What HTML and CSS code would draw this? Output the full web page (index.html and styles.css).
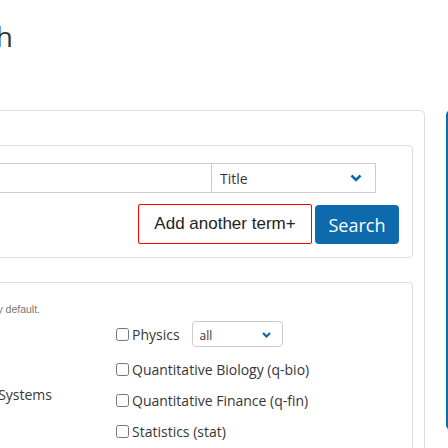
FILE: index.html
```html
<!DOCTYPE html>
<html>
<head>
<meta charset="utf-8">
<link rel="stylesheet" href="styles.css">
</head>
<body>
<div class="page">
  <main class="main">
    <h1 class="title">Advanced Search</h1>
    <div class="outer">
      <div class="fieldset terms">
        <div class="term-row">
          <input class="term-input" type="text">
          <div class="field-select">
            <span>Title</span>
            <svg class="chev" width="12" height="8" viewBox="0 0 12 8"><path d="M1.5 1.5 L6 6 L10.5 1.5" fill="none" stroke="#0d6aad" stroke-width="2.6"/></svg>
          </div>
        </div>
        <div class="btn-row">
          <button class="btn-add">Add another term+</button>
          <button class="btn-search">Search</button>
        </div>
      </div>
      <div class="fieldset subjects">
        <p class="note">Subject: All classifications will be included by default.</p>
        <div class="cols">
          <div class="col-left">
            <div class="left-item">Electrical Engineering and Systems</div>
          </div>
          <div class="col-right">
            <label class="cb first"><input type="checkbox"><span>Physics</span>
              <span class="mini-select"><span>all</span>
                <svg width="9" height="6" viewBox="0 0 9 6"><path d="M1 1 L4.5 4.5 L8 1" fill="none" stroke="#0d6aad" stroke-width="2.2"/></svg>
              </span>
            </label>
            <label class="cb"><input type="checkbox"><span>Quantitative Biology (q-bio)</span></label>
            <label class="cb"><input type="checkbox"><span>Quantitative Finance (q-fin)</span></label>
            <label class="cb"><input type="checkbox"><span>Statistics (stat)</span></label>
          </div>
        </div>
      </div>
    </div>
  </main>
  <aside class="side">
    <div class="side-box">
      <div class="side-head"></div>
    </div>
  </aside>
</div>
</body>
</html>
```
FILE: styles.css
```css
html, body {
  margin: 0;
  padding: 0;
  background: #fff;
  overflow: hidden;
}
body {
  font-family: "Open Sans", "Liberation Sans", sans-serif;
  color: #363636;
  width: 448px;
  height: 448px;
}
.page {
  display: flex;
  gap: 21px;
  margin-left: -240px;
  width: 900px;
}
.main {
  width: 665px;
  flex: none;
}
.title {
  margin: 0;
  width: 253px;
  text-align: right;
  font-weight: 400;
  font-size: 28px;
  line-height: 40px;
  padding-top: 16px;
  height: 110px;
  box-sizing: border-box;
  color: #363636;
  white-space: nowrap;
}
.outer {
  border: 1px solid #dddddd;
  border-radius: 5px;
  padding: 34px 11px 0 11px;
  height: 400px;
}
.fieldset {
  border: 1px solid #dddddd;
  border-radius: 4px;
}
.terms {
  padding: 17px 13px 13px 20px;
}
.term-row {
  display: flex;
  height: 30px;
  margin-right: 23px;
}
.term-input {
  flex: 1;
  height: 30px;
  box-sizing: border-box;
  border: 1px solid #cccccc;
  border-right: none;
  margin: 0;
  padding: 0;
}
.field-select {
  width: 165px;
  box-sizing: border-box;
  border: 1px solid #cccccc;
  display: flex;
  align-items: center;
  justify-content: space-between;
  padding: 0 13px 0 8px;
  font-size: 14px;
  color: #363636;
}
.chev { display: block; }
.btn-row {
  display: flex;
  justify-content: flex-end;
  align-items: flex-start;
  margin-top: 11px;
  gap: 3px;
}
.btn-add {
  width: 174px;
  height: 40px;
  margin: 0;
  background: #fff;
  border: 1px solid #ff0000;
  border-radius: 2px;
  font-family: "Liberation Sans", Arial, sans-serif;
  font-size: 17px;
  color: #222;
  padding: 0;
}
.btn-search {
  width: 84px;
  height: 39px;
  margin: 1px 0 0 0;
  background: #0d6aad;
  border: none;
  border-radius: 4px;
  color: #fff;
  font-family: "Open Sans", sans-serif;
  font-size: 18px;
  padding: 0;
}
.subjects {
  margin-top: 24px;
  height: 200px;
  padding-top: 19px;
}
.note {
  margin: 0;
  width: 267px;
  text-align: right;
  font-family: "Liberation Sans", Arial, sans-serif;
  font-size: 10.5px;
  line-height: 14px;
  color: #777;
  white-space: nowrap;
}
.cols {
  display: grid;
  grid-template-columns: 343px 1fr;
  margin-top: 5px;
}
.col-left {
  padding-top: 64px;
}
.left-item {
  width: 279px;
  text-align: right;
  white-space: nowrap;
  font-size: 14px;
  line-height: 20px;
  color: #363636;
}
.col-right {
  display: flex;
  flex-direction: column;
}
.cb {
  display: flex;
  align-items: center;
  height: 31px;
  font-size: 14px;
  color: #363636;
  white-space: nowrap;
}
.cb.first {
  height: 26px;
  margin-bottom: 7px;
}
.cb input {
  margin: 0 3px 0 0;
  width: 13px;
  height: 13px;
}
.mini-select {
  margin-left: 12px;
  width: 91px;
  height: 26px;
  box-sizing: border-box;
  border: 1px solid #cccccc;
  border-radius: 4px;
  display: flex;
  align-items: center;
  justify-content: space-between;
  padding: 2px 11px 0 7px;
  font-size: 12px;
}
.mini-select svg { display: block; }
.side {
  width: 200px;
  flex: none;
  padding-top: 110px;
}
.side-box {
  border: 2px solid #0d6aad;
  border-radius: 5px;
  height: 320px;
  box-sizing: border-box;
  overflow: hidden;
}
.side-head {
  height: 40px;
  background: #0d6aad;
}
```
